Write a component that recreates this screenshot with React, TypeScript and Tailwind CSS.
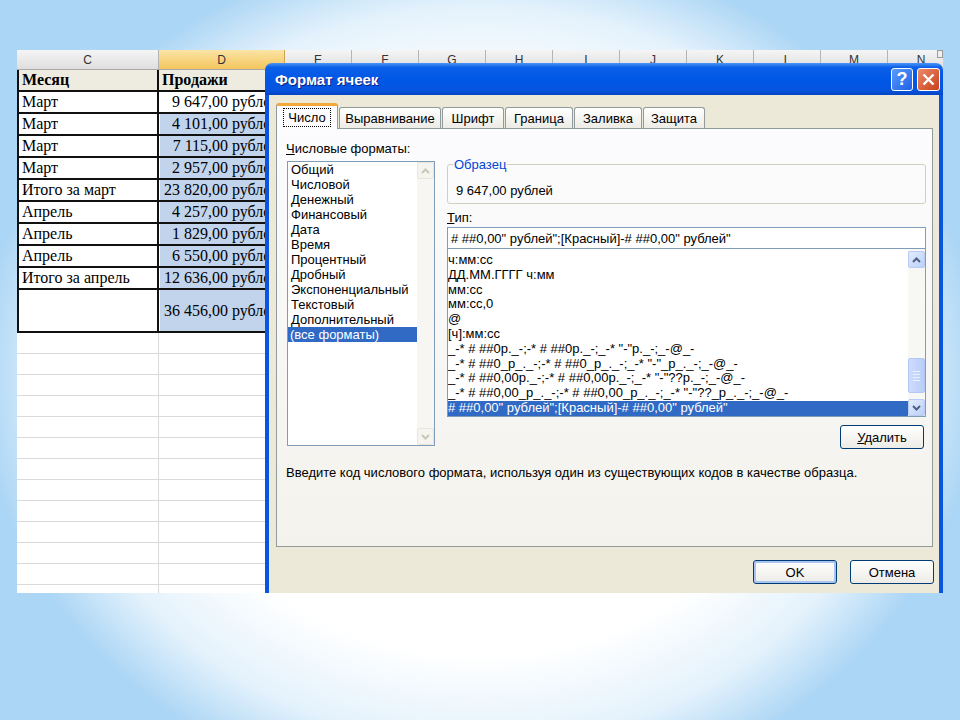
import React from 'react';

const SHEET_ROWS = [
  { month: 'Март', sum: '9 647,00 рублей', active: true },
  { month: 'Март', sum: '4 101,00 рублей' },
  { month: 'Март', sum: '7 115,00 рублей' },
  { month: 'Март', sum: '2 957,00 рублей' },
  { month: 'Итого за март', sum: '23 820,00 рублей' },
  { month: 'Апрель', sum: '4 257,00 рублей' },
  { month: 'Апрель', sum: '1 829,00 рублей' },
  { month: 'Апрель', sum: '6 550,00 рублей' },
  { month: 'Итого за апрель', sum: '12 636,00 рублей' },
];

const HEADER_COLS = ['E', 'F', 'G', 'H', 'I', 'J', 'K', 'L', 'M', 'N'];

const TABS = [
  { label: 'Число', width: 'w-[62px]', active: true },
  { label: 'Выравнивание', width: 'w-[102px]' },
  { label: 'Шрифт', width: 'w-[62px]' },
  { label: 'Граница', width: 'w-[68px]' },
  { label: 'Заливка', width: 'w-[68px]' },
  { label: 'Защита', width: 'w-[62px]' },
];

const CATEGORIES = [
  'Общий',
  'Числовой',
  'Денежный',
  'Финансовый',
  'Дата',
  'Время',
  'Процентный',
  'Дробный',
  'Экспоненциальный',
  'Текстовый',
  'Дополнительный',
];

const TYPE_CODES = [
  'ч:мм:сс',
  'ДД.ММ.ГГГГ ч:мм',
  'мм:сс',
  'мм:сс,0',
  '@',
  '[ч]:мм:сс',
  '_-* # ##0р._-;-* # ##0р._-;_-* "-"р._-;_-@_-',
  '_-* # ##0_р_._-;-* # ##0_р_._-;_-* "-"_р_._-;_-@_-',
  '_-* # ##0,00р._-;-* # ##0,00р._-;_-* "-"??р._-;_-@_-',
  '_-* # ##0,00_р_._-;-* # ##0,00_р_._-;_-* "-"??_р_._-;_-@_-',
];

const FORMAT_CODE = '# ##0,00" рублей";[Красный]-# ##0,00" рублей"';

const Arrow = ({ up, disabled }: { up?: boolean; disabled?: boolean }) => (
  <svg width="9" height="6" viewBox="0 0 9 6">
    <path
      d={up ? 'M1 5 L4.5 1.5 L8 5' : 'M1 1 L4.5 4.5 L8 1'}
      fill="none"
      stroke={disabled ? '#c9c7ba' : '#4d6185'}
      strokeWidth="2"
    />
  </svg>
);

const ScrollButton = ({ up, disabled }: { up?: boolean; disabled?: boolean }) => (
  <div
    className={`h-[17px] w-[17px] flex items-center justify-center rounded-[2px] border ${
      disabled
        ? 'border-[#e8e6dc] bg-[#f5f4ef]'
        : 'border-[#b7cbf4] bg-[linear-gradient(135deg,#e3ebfd,#bcd0f8)]'
    }`}
  >
    <Arrow up={up} disabled={disabled} />
  </div>
);

const ExcelSheet = () => (
  <div className="font-['Liberation_Serif','Times_New_Roman',serif] text-[16px] text-black">
    {/* column letters */}
    <div className="flex h-[20px] border-b border-[#a8a8a8] font-['Liberation_Sans',Arial,sans-serif] text-[12px] text-[#333]">
      <div className="w-[142px] shrink-0 flex items-center justify-center border-r border-[#b5b5b5] bg-[linear-gradient(#f5f5f5,#dedede)]">C</div>
      <div className="w-[126px] shrink-0 flex items-center justify-center border-r border-[#c9a64f] bg-[linear-gradient(#fbe4a6,#f3c55c)]">D</div>
      {HEADER_COLS.map(c => (
        <div key={c} className="w-[67px] shrink-0 flex items-center justify-center border-r border-[#b5b5b5] bg-[linear-gradient(#f5f5f5,#dedede)]">
          {c}
        </div>
      ))}
    </div>

    {/* titles */}
    <div className="flex h-[22px] border-b-2 border-[#111] font-bold">
      <div className="w-[142px] shrink-0 flex items-center pl-[3px] border-l-2 border-r-2 border-[#111] bg-[#eeece1]">Месяц</div>
      <div className="w-[126px] shrink-0 flex items-center pl-[3px] bg-[#eeece1]">Продажи</div>
    </div>

    {SHEET_ROWS.map((r, i) => (
      <div key={i} className="flex h-[22px] border-b-2 border-[#111]">
        <div className="w-[142px] shrink-0 flex items-center pl-[3px] border-l-2 border-r-2 border-[#111] bg-white whitespace-nowrap">{r.month}</div>
        <div className={`w-[126px] shrink-0 flex items-center justify-end pr-[6px] border-l border-white whitespace-nowrap ${r.active ? 'bg-white' : 'bg-[#c2d3ec]'}`}>
          {r.sum}
        </div>
      </div>
    ))}

    <div className="flex h-[43px] border-b-2 border-[#111]">
      <div className="w-[142px] shrink-0 border-l-2 border-r-2 border-[#111] bg-white" />
      <div className="w-[126px] shrink-0 flex items-center justify-end pr-[6px] border-l border-white bg-[#c2d3ec] whitespace-nowrap">36 456,00 рублей</div>
    </div>

    {Array.from({ length: 13 }).map((_, i) => (
      <div key={i} className="flex h-[21px] border-b border-[#dadada]">
        <div className="w-[142px] shrink-0 border-r border-[#dadada]" />
        <div className="w-[126px] shrink-0" />
      </div>
    ))}
  </div>
);

const FormatDialog = () => (
  <div className="absolute left-[248px] top-[13px] w-[678px] h-[560px] flex flex-col font-['Liberation_Sans',Arial,sans-serif] text-[13px] leading-[15px] text-black">
    {/* title bar */}
    <div className="h-[32px] shrink-0 flex items-center pl-[10px] pr-[3px] rounded-t-[7px] bg-[linear-gradient(180deg,#4a95f6_0%,#0b5fe9_14%,#0058e6_50%,#0554df_85%,#0745c4_100%)]">
      <span className="text-[15px] font-bold text-white [text-shadow:1px_1px_#0a1f86]">Формат ячеек</span>
      <div className="ml-auto flex gap-[4px]">
        <div className="w-[22px] h-[23px] rounded-[3px] border border-white flex items-center justify-center bg-[linear-gradient(135deg,#5a9cfb,#1f5fe8)] text-white text-[18px] font-bold">?</div>
        <div className="w-[23px] h-[23px] rounded-[3px] border border-white flex items-center justify-center bg-[linear-gradient(135deg,#ec8b6a,#c8401a)]">
          <svg width="13" height="13" viewBox="0 0 13 13">
            <path d="M1.5 1.5 L11.5 11.5 M11.5 1.5 L1.5 11.5" stroke="white" strokeWidth="2.4" />
          </svg>
        </div>
      </div>
    </div>

    {/* body */}
    <div className="flex-1 border-x-4 border-[#0a55e0] bg-[#ece9d8] pt-[8px]">
      {/* tabs */}
      <div className="flex items-end h-[25px] ml-[7px] gap-[1px]">
        {TABS.map(t =>
          t.active ? (
            <div key={t.label} className={`${t.width} h-[26px] -mb-[1px] relative z-10 flex items-center justify-center rounded-t-[3px] border-x border-[#919b9c] border-t-[3px] border-t-[#f3a93a] bg-[#fcfcfe]`}>
              <span className="px-[4px] py-[1px] outline-1 outline-dotted outline-black -mt-[1px]">{t.label}</span>
            </div>
          ) : (
            <div key={t.label} className={`${t.width} h-[21px] flex items-center justify-center rounded-t-[3px] border-x border-t border-[#919b9c] bg-[linear-gradient(#ffffff,#ecebe6)]`}>
              {t.label}
            </div>
          )
        )}
      </div>

      {/* tab page */}
      <div className="ml-[7px] w-[657px] h-[419px] border border-[#919b9c] bg-[linear-gradient(#fcfcfe,#f3f2ec)] pt-[12px]">
        <div className="flex">
          {/* categories */}
          <div className="w-[170px] shrink-0 pl-[9px]">
            <div>
              <span className="underline">Ч</span>исловые форматы:
            </div>
            <div className="mt-[5px] ml-[1px] w-[148px] h-[285px] border border-[#7f9db9] bg-white flex">
              <div className="flex-1">
                {CATEGORIES.map(c => (
                  <div key={c} className="pl-[3px] whitespace-nowrap">{c}</div>
                ))}
                <div className="pl-[2px] bg-[#316ac5] text-white">(все форматы)</div>
              </div>
              <div className="w-[17px] flex flex-col justify-between bg-[#f7f6f2]">
                <ScrollButton up disabled />
                <ScrollButton disabled />
              </div>
            </div>
          </div>

          {/* right side */}
          <div className="w-[479px] shrink-0 pt-[16px]">
            <fieldset className="border border-[#d0d0bf] rounded-[3px] px-[8px] pb-[5px]">
              <legend className="-ml-[3px] px-[1px] text-[#0046d5]">Образец</legend>
              <div className="pt-[11px]">9 647,00 рублей</div>
            </fieldset>

            <div className="mt-[6px]">
              <span className="underline">Т</span>ип:
            </div>
            <div className="mt-[2px] h-[22px] border border-[#7f9db9] bg-white flex items-center pl-[3px] whitespace-nowrap">
              {FORMAT_CODE}
            </div>
            <div className="h-[168px] border-x border-b border-[#7f9db9] bg-white flex">
              <div className="flex-1 pt-[4px] leading-[14.8px] overflow-hidden">
                {TYPE_CODES.map(c => (
                  <div key={c} className="whitespace-nowrap">{c}</div>
                ))}
                <div className="bg-[#316ac5] text-white whitespace-nowrap">{FORMAT_CODE}</div>
              </div>
              <div className="w-[17px] pt-[2px] flex flex-col bg-[#f7f7f3]">
                <ScrollButton up />
                <div className="flex-1 flex flex-col">
                  <div className="mt-[90px] h-[35px] rounded-[2px] border border-[#b3c7f5] bg-[linear-gradient(90deg,#cfdcfc,#b8cdf8)] flex flex-col items-center justify-center gap-[2px]">
                    <div className="w-[7px] h-[1px] bg-[#eef3fe]" />
                    <div className="w-[7px] h-[1px] bg-[#eef3fe]" />
                    <div className="w-[7px] h-[1px] bg-[#eef3fe]" />
                    <div className="w-[7px] h-[1px] bg-[#eef3fe]" />
                  </div>
                </div>
                <ScrollButton />
              </div>
            </div>

            <div className="mt-[8px] flex justify-end pr-[2px]">
              <button className="w-[84px] h-[24px] rounded-[3px] border border-[#003c74] bg-[linear-gradient(#ffffff,#ecebe6)]">
                <span className="underline">У</span>далить
              </button>
            </div>
          </div>
        </div>

        <div className="mt-[16px] pl-[9px] whitespace-nowrap">
          Введите код числового формата, используя один из существующих кодов в качестве образца.
        </div>
      </div>

      {/* buttons */}
      <div className="mt-[13px] flex justify-end gap-[13px] pr-[5px]">
        <button className="w-[84px] h-[24px] rounded-[3px] border border-[#003c74] bg-[linear-gradient(#ffffff,#ecebe6)] shadow-[inset_0_0_0_2px_#a9c4f2]">OK</button>
        <button className="w-[84px] h-[24px] rounded-[3px] border border-[#003c74] bg-[linear-gradient(#ffffff,#ecebe6)]">Отмена</button>
      </div>
    </div>
  </div>
);

const App: React.FC = () => {
  return (
    <div className="w-[960px] h-[720px] overflow-hidden pt-[50px] pl-[17px] bg-[radial-gradient(ellipse_52%_60%_at_50%_52%,#ffffff_65%,#e4f2fc_85%,#acd6f5_100%)]">
      <div className="relative w-[926px] h-[543px] overflow-hidden bg-white">
        <ExcelSheet />
        <div className="absolute right-0 top-0 w-[6px] h-[8px] border border-[#9a9a9a] bg-[#f0f0f0]" />
        <FormatDialog />
      </div>
    </div>
  );
};

export default App;
